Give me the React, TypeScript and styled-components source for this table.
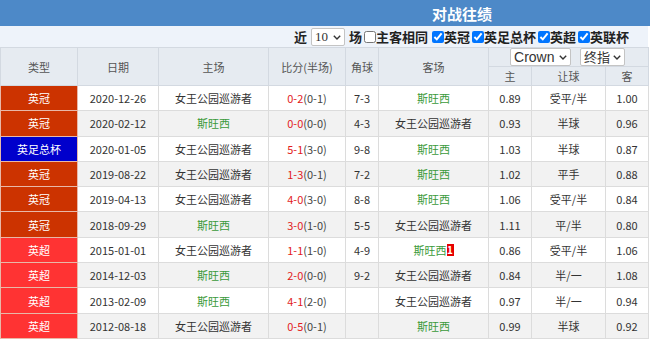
import React from "react";
import styled, { createGlobalStyle } from "styled-components";

const Global = createGlobalStyle`
  html, body { margin: 0; padding: 0; background: #fff; }
  body { font-family: "Noto Sans CJK SC", "Liberation Sans", sans-serif; }
`;

const Wrap = styled.div`
  width: 650px;
`;

const TitleBar = styled.div`
  height: 26px;
  background: #4d89c8;
  color: #fff;
  font-size: 15px;
  font-weight: bold;
  display: flex;
  align-items: center;
  justify-content: center;
  padding-left: 274px;
  box-sizing: border-box;
`;

const FilterBar = styled.div`
  height: 21px;
  background: #eef3fa;
  display: flex;
  align-items: center;
  justify-content: flex-end;
  padding-right: 19px;
  font-size: 13px;
  font-weight: bold;
  color: #222;
  width: 648px;
  box-sizing: border-box;
`;

const Label = styled.span`
  line-height: 21px;
`;

const Check = styled.input.attrs({ type: "checkbox" })<{ $ml?: number }>`
  margin: 0 0 0 ${(p) => p.$ml ?? 2}px;
  width: 12px;
  height: 12px;
`;

const SelectBox = styled.span<{ $w: number; $mx: number }>`
  position: relative;
  display: inline-flex;
  width: ${(p) => p.$w}px;
  height: 18px;
  margin: 0 ${(p) => p.$mx}px;
`;

const NativeSelect = styled.select<{ $size: number; $family: string }>`
  appearance: none;
  -webkit-appearance: none;
  width: 100%;
  height: 100%;
  box-sizing: border-box;
  border: 1px solid #c4c4c4;
  border-radius: 2px;
  background: #fff;
  color: #333;
  font-size: ${(p) => p.$size}px;
  font-family: ${(p) => p.$family};
  font-weight: normal;
  padding: 0 14px 0 3px;
  line-height: 16px;
  outline: none;
`;

const Chevron = styled.svg`
  position: absolute;
  right: 4px;
  top: 50%;
  width: 8px;
  height: 5px;
  margin-top: -2px;
  pointer-events: none;
`;

function Dropdown(props: {
  w: number;
  mx?: number;
  size: number;
  family: string;
  value: string;
  options: string[];
}) {
  return (
    <SelectBox $w={props.w} $mx={props.mx ?? 0}>
      <NativeSelect $size={props.size} $family={props.family} defaultValue={props.value}>
        {props.options.map((o) => (
          <option key={o}>{o}</option>
        ))}
      </NativeSelect>
      <Chevron viewBox="0 0 8 5">
        <path d="M0.8 0.8 L4 4 L7.2 0.8" fill="none" stroke="#333" strokeWidth="1.4" />
      </Chevron>
    </SelectBox>
  );
}

const Table = styled.table`
  width: 648px;
  border-collapse: collapse;
  table-layout: fixed;
  font-size: 11px;
  color: #333;
`;

const Th = styled.th`
  background: #e6ebf1;
  border: 1px solid #d3d9e1;
  font-weight: normal;
  color: #555;
  height: 18px;
  padding: 0;
  text-align: center;
`;

const SelRow = styled.div`
  display: flex;
  justify-content: flex-end;
  align-items: center;
  gap: 9px;
  padding-right: 23px;
`;

const Tr = styled.tr<{ $alt: boolean }>`
  background: ${(p) => (p.$alt ? "#f2f2f2" : "#fff")};
`;

const Td = styled.td`
  border: 1px solid #dcdcdc;
  height: 24.3px;
  padding: 0;
  text-align: center;
  white-space: nowrap;
  overflow: hidden;
`;

const TypeTd = styled(Td)<{ $bg: string }>`
  background: ${(p) => p.$bg};
  color: #fff;
  border-color: #e8b8a8;
`;

const Team = styled.span<{ $green: boolean }>`
  color: ${(p) => (p.$green ? "#3a9a3a" : "#333")};
`;

const ScoreMain = styled.span`
  color: #e21b1b;
`;

const ScoreHalf = styled.span`
  color: #444;
`;

const Badge = styled.span`
  display: inline-block;
  background: #e60000;
  color: #fff;
  font-weight: bold;
  font-size: 10px;
  line-height: 12px;
  width: 7px;
  text-align: center;
  vertical-align: 1px;
`;

type Row = {
  type: string;
  date: string;
  home: string;
  score: string;
  half: string;
  corner: string;
  away: string;
  h: string;
  line: string;
  a: string;
  badge?: boolean;
};

const QPR = "女王公园巡游者";
const SW = "斯旺西";

const rows: Row[] = [
  { type: "英冠", date: "2020-12-26", home: QPR, score: "0-2", half: "(0-1)", corner: "7-3", away: SW, h: "0.89", line: "受平/半", a: "1.00" },
  { type: "英冠", date: "2020-02-12", home: SW, score: "0-0", half: "(0-0)", corner: "4-3", away: QPR, h: "0.93", line: "半球", a: "0.96" },
  { type: "英足总杯", date: "2020-01-05", home: QPR, score: "5-1", half: "(3-0)", corner: "9-8", away: SW, h: "1.03", line: "半球", a: "0.87" },
  { type: "英冠", date: "2019-08-22", home: QPR, score: "1-3", half: "(0-1)", corner: "7-2", away: SW, h: "1.02", line: "平手", a: "0.88" },
  { type: "英冠", date: "2019-04-13", home: QPR, score: "4-0", half: "(3-0)", corner: "8-8", away: SW, h: "1.06", line: "受平/半", a: "0.84" },
  { type: "英冠", date: "2018-09-29", home: SW, score: "3-0", half: "(1-0)", corner: "5-5", away: QPR, h: "1.11", line: "平/半", a: "0.80" },
  { type: "英超", date: "2015-01-01", home: QPR, score: "1-1", half: "(1-0)", corner: "4-9", away: SW, h: "0.86", line: "受平/半", a: "1.06", badge: true },
  { type: "英超", date: "2014-12-03", home: SW, score: "2-0", half: "(0-0)", corner: "9-2", away: QPR, h: "0.84", line: "半/一", a: "1.08" },
  { type: "英超", date: "2013-02-09", home: SW, score: "4-1", half: "(2-0)", corner: "", away: QPR, h: "0.97", line: "半/一", a: "0.94" },
  { type: "英超", date: "2012-08-18", home: QPR, score: "0-5", half: "(0-1)", corner: "", away: SW, h: "0.99", line: "半球", a: "0.92" },
];

const typeBg: Record<string, string> = {
  英冠: "#cc3300",
  英足总杯: "#0000cc",
  英超: "#ff3333",
};

const SANS = '"Liberation Sans", "Noto Sans CJK SC", sans-serif';
const CJK = '"Noto Sans CJK SC", sans-serif';
const SERIF = '"Liberation Serif", serif';

export default function App() {
  return (
    <Wrap>
      <Global />
      <TitleBar>对战往绩</TitleBar>
      <FilterBar>
        <Label>近</Label>
        <Dropdown w={34} mx={4} size={13} family={SERIF} value="10" options={["10", "20"]} />
        <Label>场</Label>
        <Check />
        <Label>主客相同</Label>
        <Check $ml={4} defaultChecked />
        <Label>英冠</Label>
        <Check defaultChecked />
        <Label>英足总杯</Label>
        <Check defaultChecked />
        <Label>英超</Label>
        <Check defaultChecked />
        <Label>英联杯</Label>
      </FilterBar>
      <Table>
        <colgroup>
          <col style={{ width: 77 }} />
          <col style={{ width: 81 }} />
          <col style={{ width: 110 }} />
          <col style={{ width: 77 }} />
          <col style={{ width: 33 }} />
          <col style={{ width: 110 }} />
          <col style={{ width: 43 }} />
          <col style={{ width: 74 }} />
          <col style={{ width: 43 }} />
        </colgroup>
        <thead>
          <tr>
            <Th rowSpan={2}>类型</Th>
            <Th rowSpan={2}>日期</Th>
            <Th rowSpan={2}>主场</Th>
            <Th rowSpan={2}>比分(半场)</Th>
            <Th rowSpan={2}>角球</Th>
            <Th rowSpan={2}>客场</Th>
            <Th colSpan={3}>
              <SelRow>
                <Dropdown w={61} size={14} family={SANS} value="Crown" options={["Crown"]} />
                <Dropdown w={45} size={13} family={CJK} value="终指" options={["终指", "初指"]} />
              </SelRow>
            </Th>
          </tr>
          <tr>
            <Th>主</Th>
            <Th>让球</Th>
            <Th>客</Th>
          </tr>
        </thead>
        <tbody>
          {rows.map((r, i) => (
            <Tr key={r.date} $alt={i % 2 === 1}>
              <TypeTd $bg={typeBg[r.type]}>{r.type}</TypeTd>
              <Td>{r.date}</Td>
              <Td>
                <Team $green={r.home === SW}>{r.home}</Team>
              </Td>
              <Td>
                <ScoreMain>{r.score}</ScoreMain>
                <ScoreHalf>{r.half}</ScoreHalf>
              </Td>
              <Td>{r.corner}</Td>
              <Td>
                <Team $green={r.away === SW}>{r.away}</Team>
                {r.badge && <Badge>1</Badge>}
              </Td>
              <Td>{r.h}</Td>
              <Td>{r.line}</Td>
              <Td>{r.a}</Td>
            </Tr>
          ))}
        </tbody>
      </Table>
    </Wrap>
  );
}
